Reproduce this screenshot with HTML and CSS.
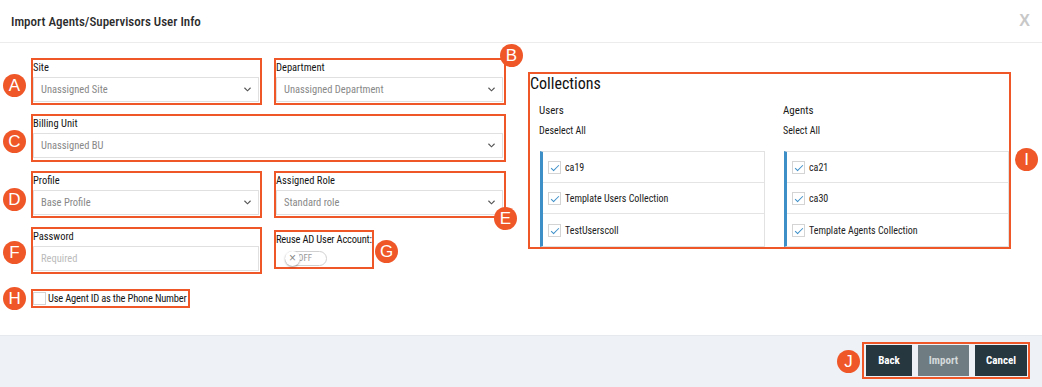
FILE: index.html
```html
<!DOCTYPE html>
<html>
  <head>
    <meta charset="utf-8">
    <title>Import Agents/Supervisors User Info</title>
    <link rel="stylesheet" href="styles.css">
  </head>
  <body>
    <div class="page">
      <div class="header">
        <h1 class="title">Import Agents/Supervisors User Info</h1>
        <span class="close">X</span>
      </div>

      <div class="content">
        <div class="form">
          <div class="row">
            <div class="mark field">
              <span class="badge badge_a">A</span>
              <label class="field_label">Site</label>
              <div class="select">Unassigned Site<svg class="chevron" viewBox="0 0 8 5"><polyline points="0.5,0.5 4,4 7.5,0.5"/></svg></div>
            </div>
            <div class="mark field">
              <span class="badge badge_b">B</span>
              <label class="field_label">Department</label>
              <div class="select">Unassigned Department<svg class="chevron" viewBox="0 0 8 5"><polyline points="0.5,0.5 4,4 7.5,0.5"/></svg></div>
            </div>
          </div>

          <div class="row">
            <div class="mark field wide">
              <span class="badge badge_c">C</span>
              <label class="field_label">Billing Unit</label>
              <div class="select">Unassigned BU<svg class="chevron" viewBox="0 0 8 5"><polyline points="0.5,0.5 4,4 7.5,0.5"/></svg></div>
            </div>
          </div>

          <div class="row">
            <div class="mark field">
              <span class="badge badge_d">D</span>
              <label class="field_label">Profile</label>
              <div class="select">Base Profile<svg class="chevron" viewBox="0 0 8 5"><polyline points="0.5,0.5 4,4 7.5,0.5"/></svg></div>
            </div>
            <div class="mark field">
              <span class="badge badge_e">E</span>
              <label class="field_label">Assigned Role</label>
              <div class="select">Standard role<svg class="chevron" viewBox="0 0 8 5"><polyline points="0.5,0.5 4,4 7.5,0.5"/></svg></div>
            </div>
          </div>

          <div class="row">
            <div class="mark field">
              <span class="badge badge_f">F</span>
              <label class="field_label">Password</label>
              <div class="select placeholder">Required</div>
            </div>
            <div class="mark reuse">
              <span class="badge badge_g">G</span>
              <label class="field_label">Reuse AD User Account:</label>
              <div class="toggle">
                <span class="toggle_text">OFF</span>
                <span class="knob">&times;</span>
              </div>
            </div>
          </div>

          <div class="mark phone">
            <span class="badge badge_h">H</span>
            <span class="box"></span>
            <span>Use Agent ID as the Phone Number</span>
          </div>
        </div>

        <div class="mark collections">
          <span class="badge badge_i">I</span>
          <h2 class="collections_title">Collections</h2>
          <div class="columns">
            <div class="column">
              <p class="column_title">Users</p>
              <p class="column_action">Deselect All</p>
              <ul class="list">
                <li><span class="box checked"></span>ca19</li>
                <li><span class="box checked"></span>Template Users Collection</li>
                <li><span class="box checked"></span>TestUserscoll</li>
              </ul>
            </div>
            <div class="column">
              <p class="column_title">Agents</p>
              <p class="column_action">Select All</p>
              <ul class="list">
                <li><span class="box checked"></span>ca21</li>
                <li><span class="box checked"></span>ca30</li>
                <li><span class="box checked"></span>Template Agents Collection</li>
              </ul>
            </div>
          </div>
        </div>
      </div>

      <div class="footer">
        <div class="mark buttons">
          <span class="badge badge_j">J</span>
          <button class="button">Back</button>
          <button class="button disabled">Import</button>
          <button class="button">Cancel</button>
        </div>
      </div>
    </div>
  </body>
</html>
```

FILE: styles.css
```css
body {
  margin: 0;
  font-family: 'Roboto Condensed', 'Roboto', sans-serif;
  color: #333;
  background: #fff;
}

.page {
  width: 1042px;
  height: 387px;
  display: flex;
  flex-direction: column;
}

.header {
  height: 42px;
  border-bottom: 1px solid #ececec;
  display: flex;
  align-items: center;
  justify-content: space-between;
  padding: 0 11px;
}

.title {
  margin: 0;
  font-size: 13px;
  font-weight: 500;
  color: #2b2b2b;
}

.close {
  font-family: 'Liberation Sans', Arial, sans-serif;
  font-size: 16px;
  font-weight: bold;
  color: #c8c8c8;
  margin-right: 1px;
}

.content {
  flex: 1;
  display: flex;
  align-items: flex-start;
  padding: 15px 0 0 31px;
}

/* orange annotation frames */
.mark {
  position: relative;
  border: 2px solid #ef5628;
  box-sizing: border-box;
}

.badge {
  position: absolute;
  width: 23px;
  height: 23px;
  border-radius: 50%;
  background: #ef5628;
  color: #fff;
  font-family: 'Liberation Sans', Arial, sans-serif;
  font-size: 17px;
  line-height: 23px;
  text-align: center;
  z-index: 2;
}

.badge_a { left: -30px; top: 14px; }
.badge_b { right: -19px; top: -16px; }
.badge_c { left: -30px; top: 14px; }
.badge_d { left: -30px; top: 15px; }
.badge_e { right: -13px; top: 34px; }
.badge_f { left: -30px; top: 12px; }
.badge_g { right: -26px; top: 8px; }
.badge_h { left: -30px; top: -4px; }
.badge_i { right: -29px; top: 74px; }
.badge_j { left: -27px; top: 6px; }

.form {
  width: 476px;
  display: flex;
  flex-direction: column;
  gap: 9px;
}

.row {
  display: grid;
  grid-template-columns: 231px 232px;
  column-gap: 12px;
  align-items: start;
}

.field {
  height: 47px;
  padding: 0 1px 1px 0;
}

.wide {
  grid-column: 1 / 3;
  height: 48px;
}

.field_label {
  display: block;
  height: 17px;
  line-height: 16px;
  font-size: 10.5px;
  color: #151515;
  white-space: nowrap;
}

.select {
  height: 25px;
  border: 1px solid #e0e0e0;
  box-sizing: border-box;
  padding: 0 7px;
  display: flex;
  align-items: center;
  justify-content: space-between;
  font-size: 10.5px;
  color: #888;
}

.placeholder {
  color: #bbb;
}

.chevron {
  width: 7px;
  height: 5px;
  fill: none;
  stroke: #555;
  stroke-width: 1.3;
}

.reuse {
  width: 100px;
  height: 39px;
  margin-top: 3px;
}

.reuse .field_label {
  letter-spacing: -0.2px;
}

.toggle {
  position: relative;
  width: 42px;
  height: 15px;
  margin: 2px 0 0 9px;
  border: 1px solid #d0d0d0;
  border-radius: 8px;
  box-sizing: border-box;
}

.toggle_text {
  position: absolute;
  left: 12px;
  top: 1px;
  font-size: 9px;
  line-height: 11px;
  color: #999;
}

.knob {
  position: absolute;
  left: -1px;
  top: -1px;
  width: 15px;
  height: 15px;
  border-radius: 50%;
  background: #fff;
  box-shadow: 0 1px 2px rgba(0, 0, 0, 0.35);
  font-family: 'Liberation Sans', Arial, sans-serif;
  font-size: 12px;
  line-height: 14px;
  text-align: center;
  color: #888;
}

.phone {
  margin-top: 6px;
  width: 159px;
  height: 19px;
  display: flex;
  align-items: center;
  gap: 2px;
  font-size: 10.5px;
  letter-spacing: -0.2px;
  color: #151515;
  white-space: nowrap;
}

.box {
  position: relative;
  width: 13px;
  height: 13px;
  border: 1px solid #d4d4d4;
  box-sizing: border-box;
  background: #fff;
  flex: none;
}

.checked::after {
  content: "";
  position: absolute;
  left: 4px;
  top: 1px;
  width: 3px;
  height: 7px;
  border: solid #3d8fc8;
  border-width: 0 1.5px 1.5px 0;
  transform: rotate(45deg);
}

.collections {
  margin: 14px 0 0 21px;
  width: 483px;
  height: 177px;
}

.collections_title {
  margin: 0;
  font-size: 16px;
  font-weight: normal;
  line-height: 20px;
  color: #111;
}

.columns {
  display: flex;
  gap: 18px;
  padding-left: 9px;
  margin-top: 10px;
}

.column {
  width: 226px;
}

.column_title {
  margin: 0;
  font-size: 11px;
  line-height: 14px;
  color: #1a1a1a;
}

.column_action {
  margin: 6px 0 0;
  font-size: 10px;
  line-height: 14px;
  color: #1a1a1a;
}

.list {
  list-style: none;
  margin: 13px 0 0 1px;
  padding: 0;
  border: 1px solid #e2e2e2;
  border-left: 3px solid #3d8fc8;
}

.list li {
  height: 31px;
  display: flex;
  align-items: center;
  gap: 4px;
  padding-left: 5px;
  font-size: 10px;
  color: #222;
  border-bottom: 1px solid #e4e4e4;
  box-sizing: border-box;
}

.list li:last-child {
  border-bottom: none;
  height: 32px;
}

.footer {
  height: 52px;
  border-top: 1px solid #e6e9ee;
  background: #eef1f6;
  display: flex;
  justify-content: flex-end;
  align-items: flex-start;
  padding-right: 12px;
  box-sizing: border-box;
}

.buttons {
  margin-top: 6px;
  height: 37px;
  padding: 1px 1px 0 2px;
  display: flex;
  gap: 6px;
}

.button {
  height: 31px;
  width: 46px;
  padding: 0;
  border: none;
  background: #263740;
  color: #fff;
  font-family: inherit;
  font-size: 11px;
  font-weight: bold;
}

.button.disabled {
  width: 51px;
  background: #6f7c81;
  color: #d4d9db;
}

.button:last-child {
  width: 52px;
}
```
